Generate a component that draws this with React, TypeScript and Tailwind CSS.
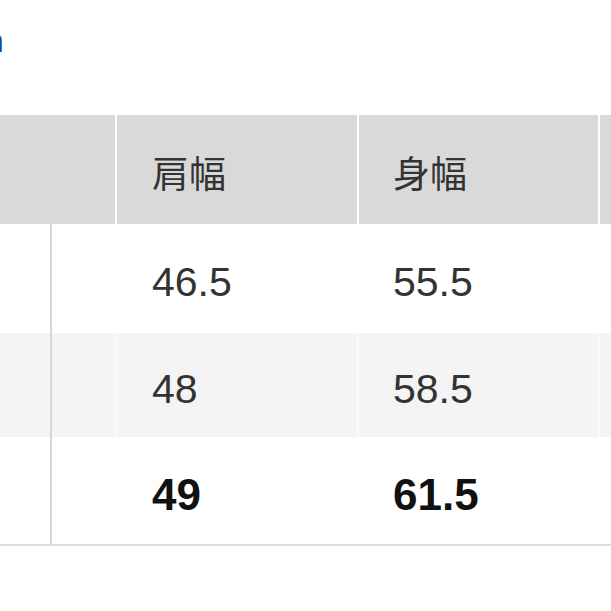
import React from "react";

const font = { fontFamily: '"Liberation Sans", Arial, "Noto Sans CJK JP", sans-serif' };

function Row({
  bg,
  left,
  cells,
  bold,
  height,
  divider,
}: {
  bg: string;
  left: React.ReactNode;
  cells: string[];
  bold?: boolean;
  height: string;
  divider: string;
}) {
  const text = bold ? "font-bold text-[44px] text-[#111]" : "text-[41px] text-[#333]";
  return (
    <div className={`flex ${bg} ${height}`}>
      {left}
      <div className={`w-[2px] shrink-0 ${divider}`} />
      <div className={`w-[240px] shrink-0 flex items-center pl-[35px] pt-[9px] ${text}`}>{cells[0]}</div>
      <div className={`w-[2px] shrink-0 ${divider}`} />
      <div className={`w-[239px] shrink-0 flex items-center pl-[34px] pt-[9px] ${text}`}>{cells[1]}</div>
      <div className={`w-[2px] shrink-0 ${divider}`} />
      <div className="flex-1" />
    </div>
  );
}

export default function App() {
  const bodyLeft = (
    <div className="flex w-[115px] shrink-0">
      <div className="w-[50px] shrink-0" />
      <div className="w-[2px] shrink-0 bg-[#d6d6d6]" />
      <div className="flex-1" />
    </div>
  );
  return (
    <div className="w-[611px] h-[611px] bg-white overflow-hidden" style={font}>
      <div className="h-[115px] pt-[22px] overflow-hidden">
        <div className="w-[4px] overflow-hidden">
          <span className="block -ml-[17px] text-[34px] leading-[36px] font-bold text-[#1a4a8c]">n</span>
        </div>
      </div>
      <div className="flex h-[109px] bg-[#d9d9d9]">
        <div className="w-[115px] shrink-0" />
        <div className="w-[2px] shrink-0 bg-white" />
        <div className="w-[240px] shrink-0 flex items-center pl-[35px] pt-[12px] text-[37px] text-[#333]">
          肩幅
        </div>
        <div className="w-[2px] shrink-0 bg-white" />
        <div className="w-[239px] shrink-0 flex items-center pl-[34px] pt-[12px] text-[37px] text-[#333]">
          身幅
        </div>
        <div className="w-[2px] shrink-0 bg-white" />
        <div className="flex-1" />
      </div>
      <Row bg="bg-white" left={bodyLeft} cells={["46.5", "55.5"]} height="h-[109px]" divider="bg-white" />
      <Row bg="bg-[#f4f4f4]" left={bodyLeft} cells={["48", "58.5"]} height="h-[104px]" divider="bg-[#fafafa]" />
      <Row bg="bg-white" left={bodyLeft} cells={["49", "61.5"]} bold height="h-[107px]" divider="bg-white" />
      <div className="h-[2px] bg-[#dcdcdc]" />
    </div>
  );
}
